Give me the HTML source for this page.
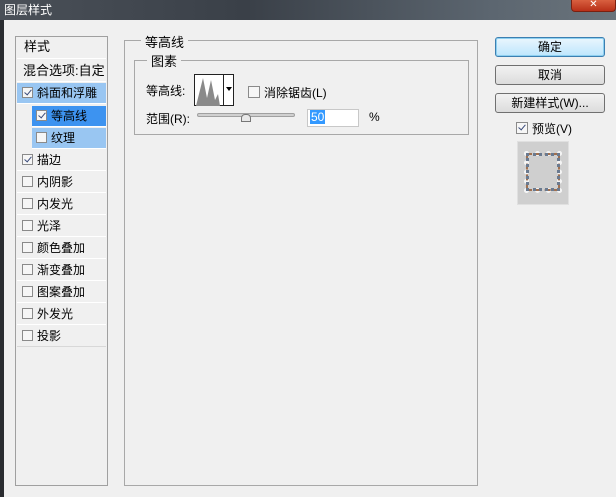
<!DOCTYPE html>
<html><head><meta charset="utf-8"><style>
*{margin:0;padding:0;box-sizing:border-box}
body{width:616px;height:497px;background:#f0f0f0;position:relative;overflow:hidden;font-family:"Liberation Sans","Noto Sans CJK SC","WenQuanYi Zen Hei",sans-serif;font-size:12px;color:#000}
.a{position:absolute}
.title{left:0;top:0;width:616px;height:20px;background:linear-gradient(90deg,#4a5058,#3a4048 40%,#5c6670 80%,#6a747c);color:#fff;font-size:12px;padding:1px 0 0 4px}
.close{left:571px;top:0;width:45px;height:12px;background:linear-gradient(#d86040,#b83018);border:1px solid #7a2010;border-top:none;border-radius:0 0 4px 4px;color:#fff;text-align:center;font-size:10px;line-height:10px}
.leftstrip{left:0;top:20px;width:4px;height:477px;background:#2a2c30}
.lp{left:15px;top:36px;width:93px;height:450px;border:1px solid #a0a0a0;background:#f0f0f0}
.row{position:absolute;left:1px;width:89px;height:21px;line-height:21px;border-bottom:1px solid #fff}
.cb{display:inline-block;width:11px;height:11px;border:1px solid #8a8a8a;background:#f6f6f6;vertical-align:-1px;margin-right:4px;position:relative}
.cb.c::after{content:"";position:absolute;left:3px;top:0px;width:3px;height:6px;border:solid #3a4a7a;border-width:0 1.5px 1.5px 0;transform:rotate(40deg)}
.rp{left:124px;top:40px;width:354px;height:446px;border:1px solid #a8a8a8}
.legend{background:#f0f0f0;padding:0 4px;position:absolute;font-size:13px}
.btn{position:absolute;left:495px;width:110px;height:20px;border:1px solid #707070;border-radius:3px;background:linear-gradient(#f2f2f2,#dcdcdc);text-align:center;line-height:18px;font-size:12px}
</style></head><body>
<div class="a title">图层样式</div>
<div class="a close">✕</div>
<div class="a leftstrip"></div>

<div class="a lp">
  <div class="row" style="top:0;height:22px;line-height:20px;padding-left:7px;font-size:13px">样式</div>
  <div class="row" style="top:23px;height:22px;padding-left:6px;font-size:13px">混合选项:自定</div>
  <div class="row" style="top:46px;background:#99c6f2;padding-left:5px"><span class="cb c"></span>斜面和浮雕</div>
  <div class="row" style="top:69px;left:16px;width:74px;background:#3d93f0;padding-left:4px"><span class="cb c"></span>等高线</div>
  <div class="row" style="top:91px;left:16px;width:74px;background:#99c6f2;padding-left:4px"><span class="cb"></span>纹理</div>
  <div class="row" style="top:113px;padding-left:5px"><span class="cb c"></span>描边</div>
  <div class="row" style="top:135px;padding-left:5px"><span class="cb"></span>内阴影</div>
  <div class="row" style="top:157px;padding-left:5px"><span class="cb"></span>内发光</div>
  <div class="row" style="top:179px;padding-left:5px"><span class="cb"></span>光泽</div>
  <div class="row" style="top:201px;padding-left:5px"><span class="cb"></span>颜色叠加</div>
  <div class="row" style="top:223px;padding-left:5px"><span class="cb"></span>渐变叠加</div>
  <div class="row" style="top:245px;padding-left:5px"><span class="cb"></span>图案叠加</div>
  <div class="row" style="top:267px;padding-left:5px"><span class="cb"></span>外发光</div>
  <div class="row" style="top:289px;padding-left:5px;border-bottom:1px solid #d8d8d8"><span class="cb"></span>投影</div>
</div>

<div class="a rp">
  <div class="legend" style="left:16px;top:-9px">等高线</div>
  <div class="a" style="left:9px;top:19px;width:335px;height:75px;border:1px solid #a8a8a8">
    <div class="legend" style="left:12px;top:-10px">图素</div>
    <div class="a" style="left:11px;top:21px;font-size:12px">等高线:</div>
    <div class="a" style="left:59px;top:13px;width:40px;height:32px;border:1px solid #222;background:#fff">
      <svg width="28" height="30" style="position:absolute;left:1px;top:1px"><path d="M0 30 L3 18 L7 2 L11 22 L15 4 L19 24 L22 18 L24 30Z" fill="#8a8a8a"/></svg>
      <div class="a" style="left:28px;top:0;width:1px;height:30px;background:#222"></div>
      <div class="a" style="left:31px;top:12px;width:0;height:0;border:3px solid transparent;border-top:4px solid #000"></div>
    </div>
    <div class="a" style="left:113px;top:23px"><span class="cb" style="width:12px;height:12px"></span>消除锯齿(L)</div>
    <div class="a" style="left:11px;top:49px">范围(R):</div>
    <div class="a" style="left:62px;top:52px;width:98px;height:4px;border:1px solid #a0a0a0;background:#d0d0d0;border-radius:2px"></div>
    <div class="a" style="left:106px;top:53px;width:10px;height:8px;background:#e8e8e8;border:1px solid #777;border-radius:4px 4px 0 0"></div>
    <div class="a" style="left:172px;top:48px;width:52px;height:18px;background:#fff;border:1px solid #c8c8c8"><span style="background:#3399ff;color:#fff;padding:0 1px;margin-left:2px;line-height:15px">50</span></div>
    <div class="a" style="left:234px;top:49px">%</div>
  </div>
</div>

<div class="btn" style="top:37px;border-color:#3c7fb1;box-shadow:inset 0 0 0 1px #8ed0f0;background:linear-gradient(#eaf6fd,#bde6fd)">确定</div>
<div class="btn" style="top:65px">取消</div>
<div class="btn" style="top:93px">新建样式(W)...</div>
<div class="a" style="left:516px;top:120px;font-size:12px"><span class="cb c" style="width:12px;height:12px"></span>预览(V)</div>
<div class="a" style="left:517px;top:141px;width:52px;height:64px;background:#cfcfcf;border:1px solid #e0e0e0">
  <div class="a" style="left:6px;top:9px;width:38px;height:42px;border:5px dotted #f4f4f4;outline:2px dashed #a07050;outline-offset:-4px"></div>
  <div class="a" style="left:8px;top:11px;width:34px;height:38px;border:3px dotted #6a7a90"></div>
</div>
</body></html>
